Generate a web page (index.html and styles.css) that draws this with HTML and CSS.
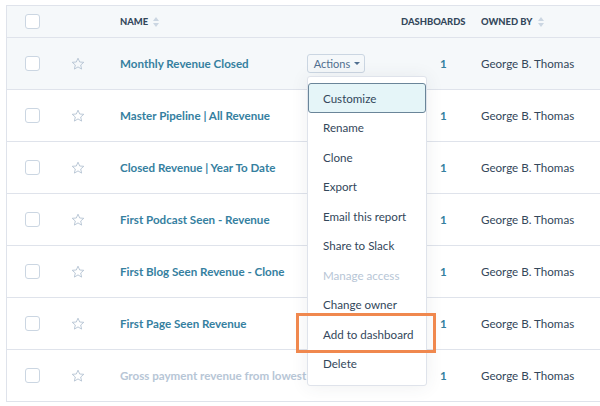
FILE: index.html
```html
<!DOCTYPE html>
<html lang="en">
<head>
  <meta charset="UTF-8" />
  <title>Reports</title>
  <link rel="stylesheet" href="styles.css">
</head>
<body>

<div class="page">
  <div class="table">
    <!-- Header -->
    <div class="row head">
      <div class="cell c-check"><span class="checkbox"></span></div>
      <div class="cell c-star"></div>
      <div class="cell c-name">NAME <span class="sort"><i class="up"></i><i class="down"></i></span></div>
      <div class="cell c-actions"></div>
      <div class="cell c-dash">DASHBOARDS</div>
      <div class="cell c-owner">OWNED BY <span class="sort"><i class="up"></i><i class="down"></i></span></div>
    </div>

    <div class="row hover">
      <div class="cell c-check"><span class="checkbox"></span></div>
      <div class="cell c-star"><svg class="star" viewBox="0 0 14 14"><path d="M7 1.2 8.7 5 12.8 5.3 9.7 8 10.6 12.1 7 9.9 3.4 12.1 4.3 8 1.2 5.3 5.3 5Z"/></svg></div>
      <div class="cell c-name"><a class="link">Monthly Revenue Closed</a></div>
      <div class="cell c-actions"><button class="actions-btn">Actions <span class="caret"></span></button></div>
      <div class="cell c-dash"><a class="count">1</a></div>
      <div class="cell c-owner">George B. Thomas</div>
    </div>

    <div class="row">
      <div class="cell c-check"><span class="checkbox"></span></div>
      <div class="cell c-star"><svg class="star" viewBox="0 0 14 14"><path d="M7 1.2 8.7 5 12.8 5.3 9.7 8 10.6 12.1 7 9.9 3.4 12.1 4.3 8 1.2 5.3 5.3 5Z"/></svg></div>
      <div class="cell c-name"><a class="link">Master Pipeline | All Revenue</a></div>
      <div class="cell c-actions"></div>
      <div class="cell c-dash"><a class="count">1</a></div>
      <div class="cell c-owner">George B. Thomas</div>
    </div>

    <div class="row">
      <div class="cell c-check"><span class="checkbox"></span></div>
      <div class="cell c-star"><svg class="star" viewBox="0 0 14 14"><path d="M7 1.2 8.7 5 12.8 5.3 9.7 8 10.6 12.1 7 9.9 3.4 12.1 4.3 8 1.2 5.3 5.3 5Z"/></svg></div>
      <div class="cell c-name"><a class="link">Closed Revenue | Year To Date</a></div>
      <div class="cell c-actions"></div>
      <div class="cell c-dash"><a class="count">1</a></div>
      <div class="cell c-owner">George B. Thomas</div>
    </div>

    <div class="row">
      <div class="cell c-check"><span class="checkbox"></span></div>
      <div class="cell c-star"><svg class="star" viewBox="0 0 14 14"><path d="M7 1.2 8.7 5 12.8 5.3 9.7 8 10.6 12.1 7 9.9 3.4 12.1 4.3 8 1.2 5.3 5.3 5Z"/></svg></div>
      <div class="cell c-name"><a class="link">First Podcast Seen - Revenue</a></div>
      <div class="cell c-actions"></div>
      <div class="cell c-dash"><a class="count">1</a></div>
      <div class="cell c-owner">George B. Thomas</div>
    </div>

    <div class="row">
      <div class="cell c-check"><span class="checkbox"></span></div>
      <div class="cell c-star"><svg class="star" viewBox="0 0 14 14"><path d="M7 1.2 8.7 5 12.8 5.3 9.7 8 10.6 12.1 7 9.9 3.4 12.1 4.3 8 1.2 5.3 5.3 5Z"/></svg></div>
      <div class="cell c-name"><a class="link">First Blog Seen Revenue - Clone</a></div>
      <div class="cell c-actions"></div>
      <div class="cell c-dash"><a class="count">1</a></div>
      <div class="cell c-owner">George B. Thomas</div>
    </div>

    <div class="row">
      <div class="cell c-check"><span class="checkbox"></span></div>
      <div class="cell c-star"><svg class="star" viewBox="0 0 14 14"><path d="M7 1.2 8.7 5 12.8 5.3 9.7 8 10.6 12.1 7 9.9 3.4 12.1 4.3 8 1.2 5.3 5.3 5Z"/></svg></div>
      <div class="cell c-name"><a class="link">First Page Seen Revenue</a></div>
      <div class="cell c-actions"></div>
      <div class="cell c-dash"><a class="count">1</a></div>
      <div class="cell c-owner">George B. Thomas</div>
    </div>

    <div class="row">
      <div class="cell c-check"><span class="checkbox"></span></div>
      <div class="cell c-star"><svg class="star" viewBox="0 0 14 14"><path d="M7 1.2 8.7 5 12.8 5.3 9.7 8 10.6 12.1 7 9.9 3.4 12.1 4.3 8 1.2 5.3 5.3 5Z"/></svg></div>
      <div class="cell c-name"><a class="link muted">Gross payment revenue from lowest</a></div>
      <div class="cell c-actions"></div>
      <div class="cell c-dash"><a class="count">1</a></div>
      <div class="cell c-owner">George B. Thomas</div>
    </div>
  </div>

  <!-- Actions menu -->
  <div class="menu">
    <div class="menu-item active">Customize</div>
    <div class="menu-item">Rename</div>
    <div class="menu-item">Clone</div>
    <div class="menu-item">Export</div>
    <div class="menu-item">Email this report</div>
    <div class="menu-item">Share to Slack</div>
    <div class="menu-item disabled">Manage access</div>
    <div class="menu-item">Change owner</div>
    <div class="menu-item marked">Add to dashboard</div>
    <div class="menu-item">Delete</div>
  </div>
</div>

</body>
</html>
```

FILE: styles.css
```css
body {
  margin: 0;
  font-family: 'Lato', sans-serif;
  color: #33475b;
  background: white;
  overflow: hidden;
}

.page {
  position: relative;
  padding-top: 5px;
  padding-left: 6px;
}

.table {
  border-top: 1px solid #dfe3eb;
  border-left: 1px solid #dfe3eb;
}

.row {
  display: flex;
  align-items: center;
  height: 51px;
  border-bottom: 1px solid #dfe3eb;
  font-size: 11.6px;
}

.row.head {
  height: 31px;
  background: #f5f8fa;
  font-size: 9.4px;
  font-weight: 900;
  letter-spacing: 0;
}

.row.hover {
  background: #f5f8fa;
}

.cell {
  display: flex;
  align-items: center;
  white-space: nowrap;
}

.c-check { width: 57px; padding-left: 18px; box-sizing: border-box; }
.c-star { width: 50px; padding-left: 7px; box-sizing: border-box; }
.c-name { width: 187px; padding-left: 6px; box-sizing: border-box; }
.c-actions { width: 94px; padding-left: 6px; box-sizing: border-box; }
.c-dash { width: 80px; padding-left: 6px; box-sizing: border-box; }
.row:not(.head) .c-dash { padding-left: 45px; }
.c-owner { padding-left: 6px; }

.checkbox {
  width: 13px;
  height: 13px;
  border: 1px solid #cbd6e2;
  border-radius: 3px;
  background: white;
}

.star {
  width: 14px;
  height: 14px;
  fill: none;
  stroke: #b4c3d3;
  stroke-width: 0.9;
  stroke-linejoin: round;
}

.link {
  color: #35809f;
  font-weight: 700;
}

.link.muted {
  color: #b7c6d6;
}

.count {
  color: #35809f;
  font-weight: 700;
}

.sort {
  display: inline-flex;
  flex-direction: column;
  gap: 2px;
  margin-left: 5px;
}

.sort i {
  width: 0;
  height: 0;
  border-left: 3px solid transparent;
  border-right: 3px solid transparent;
}

.sort .up { border-bottom: 4px solid #cbd6e2; }
.sort .down { border-top: 4px solid #cbd6e2; }

.actions-btn {
  font-family: inherit;
  font-size: 11px;
  color: #516f90;
  background: #f5f8fa;
  border: 1px solid #cbd6e2;
  border-radius: 3px;
  height: 19px;
  width: 58px;
  padding: 0 0 0 2px;
  display: flex;
  align-items: center;
  justify-content: center;
  gap: 4px;
}

.caret {
  width: 0;
  height: 0;
  border-left: 3px solid transparent;
  border-right: 3px solid transparent;
  border-top: 3px solid #516f90;
}

.menu {
  position: absolute;
  left: 307px;
  top: 76px;
  width: 118px;
  padding: 6px 0;
  background: white;
  border: 1px solid #dfe3eb;
  border-radius: 3px;
  box-shadow: 0 1px 18px rgba(45, 62, 80, 0.08);
}

.menu-item {
  position: relative;
  height: 29.5px;
  display: flex;
  align-items: center;
  padding-left: 15px;
  font-size: 11.6px;
  color: #33475b;
  box-sizing: border-box;
}

.menu-item.active {
  height: 30px;
  background: #e5f5f8;
  border: 1.5px solid #6a8599;
  border-radius: 3px;
  padding-left: 14px;
}

.menu-item.disabled {
  color: #b7c6d6;
}

.menu-item.marked::after {
  content: "";
  position: absolute;
  left: -12px;
  right: -10px;
  top: -7px;
  bottom: -4px;
  border: 3px solid #f0884e;
}
```
